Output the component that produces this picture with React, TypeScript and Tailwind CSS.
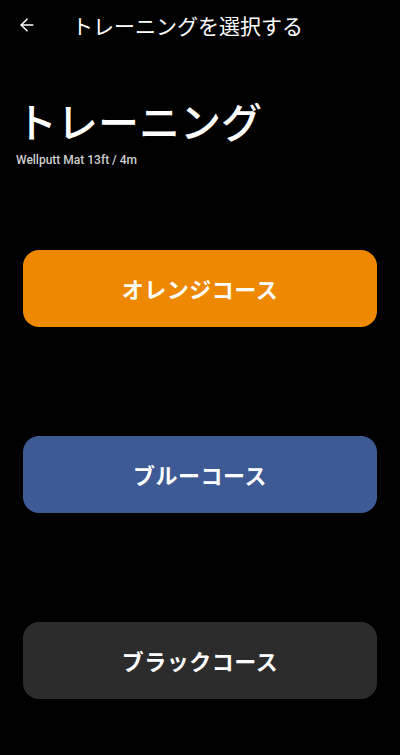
import { ArrowLeft } from "lucide-react";

type Course = {
  label: string;
  color: string;
};

const courses: Course[] = [
  { label: "オレンジコース", color: "bg-[#ee8800]" },
  { label: "ブルーコース", color: "bg-[#3d5a94]" },
  { label: "ブラックコース", color: "bg-[#2c2c2c]" },
];

export default function App() {
  return (
    <div
      className="w-[400px] h-[755px] bg-black text-white overflow-hidden flex flex-col"
      style={{ fontFamily: '"Noto Sans CJK JP", Roboto, sans-serif' }}
    >
      {/* Top bar */}
      <div className="h-[50px] flex items-center pl-[17px]">
        <ArrowLeft size={20} strokeWidth={1.8} className="shrink-0" />
        <p className="ml-[35px] text-[21px] font-normal leading-none">
          トレーニングを選択する
        </p>
      </div>

      {/* Title */}
      <div className="pl-[16px] pt-[50px]">
        <h1 className="text-[41px] font-medium leading-none">トレーニング</h1>
        <p
          className="mt-[13px] text-[12px] font-medium text-[#cfcfcf] leading-none"
          style={{ fontFamily: "Roboto, sans-serif" }}
        >
          Wellputt Mat 13ft / 4m
        </p>
      </div>

      {/* Course buttons */}
      <div className="flex flex-col gap-[109px] px-[23px] pt-[84px]">
        {courses.map((c) => (
          <button
            key={c.label}
            className={`${c.color} h-[77px] w-full rounded-[16px] flex items-center justify-center text-[22px] font-semibold tracking-[0.5px] text-white`}
          >
            {c.label}
          </button>
        ))}
      </div>
    </div>
  );
}
